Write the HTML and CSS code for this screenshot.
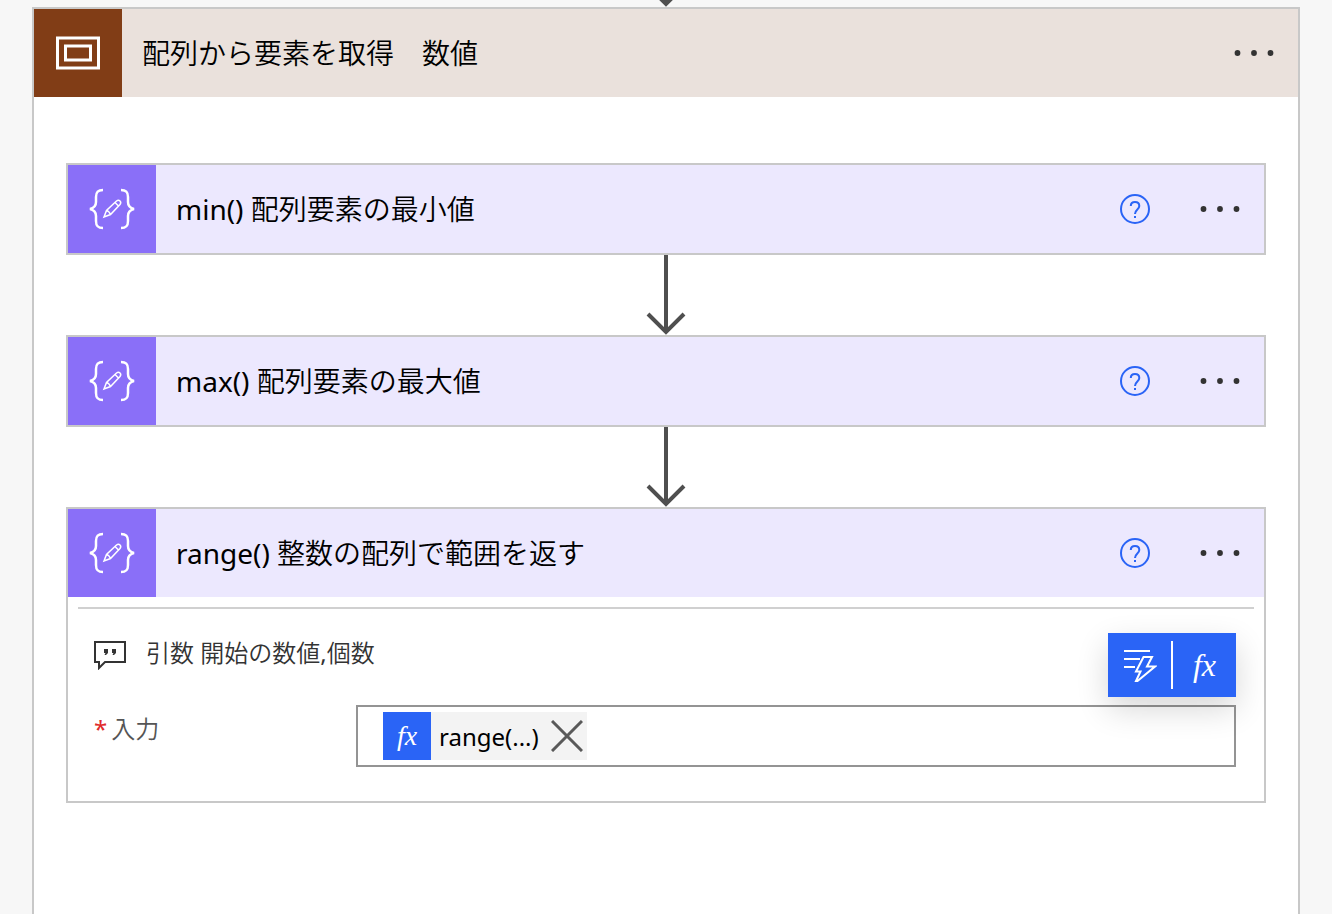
FILE: index.html
```html
<!DOCTYPE html>
<html lang="ja">
<head>
    <meta charset="UTF-8">
    <meta name="viewport" content="width=device-width, initial-scale=1.0">
    <title>配列から要素を取得　数値</title>
    <link rel="stylesheet" href="styles.css">
</head>
<body>
    <div class="connector connector-top">
        <svg width="40" height="80" viewBox="0 0 40 80"><path d="M20 0V77M2 59L20 77L38 59"/></svg>
    </div>

    <main class="scope">
        <header class="card-header scope-header">
            <div class="card-icon">
                <svg width="44" height="34" viewBox="0 0 44 34" fill="none" stroke="#fff" stroke-width="3">
                    <rect x="1.5" y="2" width="41" height="30"/>
                    <rect x="9.5" y="10" width="25" height="14"/>
                </svg>
            </div>
            <h1 class="card-title">配列から要素を取得　数値</h1>
            <button class="menu-button" aria-label="メニュー">
                <svg width="40" height="8" viewBox="0 0 40 8"><circle cx="3.5" cy="4" r="2.9"/><circle cx="20" cy="4" r="2.9"/><circle cx="36.5" cy="4" r="2.9"/></svg>
            </button>
        </header>

        <div class="scope-body">
            <section class="card">
                <header class="card-header">
                    <div class="card-icon">
                        <svg class="compose-icon" width="46" height="42" viewBox="0 0 46 42"><path class="brace" d="M14 2C8 2 7 5 7 9V14C7 18 5 20 1 21C5 22 7 24 7 28V33C7 37 8 40 14 40M32 2C38 2 39 5 39 9V14C39 18 41 20 45 21C41 22 39 24 39 28V33C39 37 38 40 32 40"/><path d="M15 29L17.500 22.500L27.500 13Q29.500 11.500 31 13T31 16.500L21.500 26.500ZM17.500 22.500Q20 23 21.500 26.500M26 14.500L29.500 18"/></svg>
                    </div>
                    <h2 class="card-title">min() 配列要素の最小値</h2>
                    <button class="help-button" aria-label="ヘルプ">
                        <svg width="30" height="30" viewBox="0 0 30 30"><circle cx="15" cy="15" r="14"/><path d="M10.800 12C10.800 9.500 12.500 8 15 8C17.700 8 19.300 9.700 19.300 12C19.300 15.500 15 15.500 15 20M15 22V24"/></svg>
                    </button>
                    <button class="menu-button" aria-label="メニュー">
                        <svg width="40" height="8" viewBox="0 0 40 8"><circle cx="3.5" cy="4" r="2.9"/><circle cx="20" cy="4" r="2.9"/><circle cx="36.5" cy="4" r="2.9"/></svg>
                    </button>
                </header>
            </section>

            <div class="connector">
                <svg width="40" height="80" viewBox="0 0 40 80"><path d="M20 0V77M2 59L20 77L38 59"/></svg>
            </div>

            <section class="card">
                <header class="card-header">
                    <div class="card-icon">
                        <svg class="compose-icon" width="46" height="42" viewBox="0 0 46 42"><path class="brace" d="M14 2C8 2 7 5 7 9V14C7 18 5 20 1 21C5 22 7 24 7 28V33C7 37 8 40 14 40M32 2C38 2 39 5 39 9V14C39 18 41 20 45 21C41 22 39 24 39 28V33C39 37 38 40 32 40"/><path d="M15 29L17.500 22.500L27.500 13Q29.500 11.500 31 13T31 16.500L21.500 26.500ZM17.500 22.500Q20 23 21.500 26.500M26 14.500L29.500 18"/></svg>
                    </div>
                    <h2 class="card-title">max() 配列要素の最大値</h2>
                    <button class="help-button" aria-label="ヘルプ">
                        <svg width="30" height="30" viewBox="0 0 30 30"><circle cx="15" cy="15" r="14"/><path d="M10.800 12C10.800 9.500 12.500 8 15 8C17.700 8 19.300 9.700 19.300 12C19.300 15.500 15 15.500 15 20M15 22V24"/></svg>
                    </button>
                    <button class="menu-button" aria-label="メニュー">
                        <svg width="40" height="8" viewBox="0 0 40 8"><circle cx="3.5" cy="4" r="2.9"/><circle cx="20" cy="4" r="2.9"/><circle cx="36.5" cy="4" r="2.9"/></svg>
                    </button>
                </header>
            </section>

            <div class="connector">
                <svg width="40" height="80" viewBox="0 0 40 80"><path d="M20 0V77M2 59L20 77L38 59"/></svg>
            </div>

            <section class="card">
                <header class="card-header">
                    <div class="card-icon">
                        <svg class="compose-icon" width="46" height="42" viewBox="0 0 46 42"><path class="brace" d="M14 2C8 2 7 5 7 9V14C7 18 5 20 1 21C5 22 7 24 7 28V33C7 37 8 40 14 40M32 2C38 2 39 5 39 9V14C39 18 41 20 45 21C41 22 39 24 39 28V33C39 37 38 40 32 40"/><path d="M15 29L17.500 22.500L27.500 13Q29.500 11.500 31 13T31 16.500L21.500 26.500ZM17.500 22.500Q20 23 21.500 26.500M26 14.500L29.500 18"/></svg>
                    </div>
                    <h2 class="card-title">range() 整数の配列で範囲を返す</h2>
                    <button class="help-button" aria-label="ヘルプ">
                        <svg width="30" height="30" viewBox="0 0 30 30"><circle cx="15" cy="15" r="14"/><path d="M10.800 12C10.800 9.500 12.500 8 15 8C17.700 8 19.300 9.700 19.300 12C19.300 15.500 15 15.500 15 20M15 22V24"/></svg>
                    </button>
                    <button class="menu-button" aria-label="メニュー">
                        <svg width="40" height="8" viewBox="0 0 40 8"><circle cx="3.5" cy="4" r="2.9"/><circle cx="20" cy="4" r="2.9"/><circle cx="36.5" cy="4" r="2.9"/></svg>
                    </button>
                </header>

                <div class="card-body">
                    <div class="comment">
                        <svg width="32" height="30" viewBox="0 0 32 30"><path d="M1 2H31V22H11L5 28V22H1Z" fill="none" stroke="#333" stroke-width="2"/><path d="M10 9H14V13L12 15H10.500L11.500 13H10ZM18 9H22V13L20 15H18.500L19.500 13H18Z" fill="#333"/></svg>
                        <span>引数 開始の数値,個数</span>
                    </div>

                    <div class="field">
                        <label class="field-label" for="inputs"><span class="required">*</span>入力</label>
                        <div class="field-box">
                            <div class="token">
                                <span class="token-icon fx">fx</span>
                                <span class="token-text">range(...)</span>
                                <button class="token-remove" aria-label="削除">
                                    <svg width="32" height="32" viewBox="0 0 32 32"><path d="M1 1L31 31M31 1L1 31"/></svg>
                                </button>
                            </div>
                            <input type="text" id="inputs">
                            <!-- Floating buttons above the active field -->
                            <div class="picker">
                                <button class="picker-button" aria-label="動的なコンテンツ">
                                    <svg width="34" height="34" viewBox="0 0 34 34" fill="none" stroke="#fff" stroke-width="2"><path d="M1 3H27M1 11H17M1 19H12"/><path d="M20.500 9H29L24 18.500H32L14.500 33H13L17.500 23.500H13Z"/></svg>
                                </button>
                                <button class="picker-button fx" aria-label="式">fx</button>
                            </div>
                        </div>
                    </div>
                </div>
            </section>
        </div>
    </main>
</body>
</html>
```
FILE: styles.css
```css
* {
    box-sizing: border-box;
}

body {
    margin: 0;
    min-height: 100vh;
    display: flex;
    flex-direction: column;
    padding: 0 32px;
    background-color: #f7f7f7;
    color: #000;
    font-family: "Noto Sans", "Noto Sans CJK JP DemiLight", "Noto Sans CJK JP", sans-serif;
    font-size: 24px;
}

button {
    display: flex;
    align-items: center;
    justify-content: center;
    padding: 0;
    border: none;
    background: none;
    cursor: pointer;
}

svg {
    display: block;
    flex: none;
}

/* Arrows between the steps */
.connector {
    display: flex;
    justify-content: center;
    align-items: flex-end;
    height: 80px;
}

.connector-top {
    height: 7px;
    overflow: hidden;
}

.connector path {
    fill: none;
    stroke: #4f4f4f;
    stroke-width: 4;
}

.scope {
    flex: 1;
    border: 2px solid #c8c8c8;
    border-bottom: none;
    background-color: #fff;
}

.scope-body {
    padding: 66px 32px 110px;
}

.card {
    border: 2px solid #c8c8c8;
    background-color: #fff;
}

.card-header {
    display: flex;
    align-items: center;
    height: 88px;
    background-color: #ece8fe;
}

.card-icon {
    display: flex;
    align-items: center;
    justify-content: center;
    width: 88px;
    height: 88px;
    background-color: #8a6ff8;
}

.scope-header {
    background-color: #eae1dc;
}

.scope-header .card-icon {
    background-color: #813d16;
}

.card-title {
    flex: 1;
    margin: 0 20px;
    font-size: 28px;
    font-weight: 400;
    line-height: 40px;
}

.compose-icon path {
    fill: none;
    stroke: #fff;
    stroke-width: 1.5;
}

.compose-icon .brace {
    stroke-width: 2.5;
}

.help-button {
    margin-right: 26px;
}

.help-button svg {
    fill: none;
    stroke: #2a64f6;
    stroke-width: 2;
}

.menu-button {
    width: 88px;
    height: 88px;
}

.menu-button svg {
    fill: #333;
}

.card-body {
    margin: 10px 10px 0;
    padding: 24px 18px 34px 16px;
    border-top: 2px solid #d0d0d0;
}

.comment {
    display: flex;
    gap: 20px;
    height: 40px;
    line-height: 40px;
    color: #333;
}

.comment svg {
    margin-top: 7px;
}

.field {
    display: flex;
    margin-top: 32px;
}

.field-label {
    width: 262px;
    padding-top: 4px;
    line-height: 40px;
    color: #555;
}

.required {
    margin-right: 4px;
    color: #e02b2b;
}

.field-box {
    position: relative;
    flex: 1;
    display: flex;
    align-items: center;
    height: 62px;
    padding-left: 25px;
    border: 2px solid #949494;
}

.field-box input {
    flex: 1;
    min-width: 0;
    height: 48px;
    border: none;
    outline: none;
    background: none;
    font: inherit;
}

.token {
    display: flex;
    align-items: center;
    height: 48px;
    background-color: #f3f3f3;
}

.fx {
    color: #fff;
    font-family: "Liberation Serif", serif;
    font-style: italic;
    font-size: 32px;
    line-height: 40px;
}

.token-icon {
    width: 48px;
    height: 48px;
    background-color: #2a64f6;
    font-size: 28px;
    line-height: 48px;
    text-align: center;
}

.token-text {
    margin: 0 12px 0 8px;
}

.token-remove {
    margin-right: 4px;
}

.token-remove path {
    stroke: #595959;
    stroke-width: 3;
}

.picker {
    position: absolute;
    right: -2px;
    bottom: 68px;
    display: flex;
    align-items: center;
    width: 128px;
    height: 64px;
    background-color: #2a64f6;
    box-shadow: 0 12px 32px rgba(0, 0, 0, 0.16);
}

.picker-button {
    flex: 1;
    height: 48px;
}

.picker-button + .picker-button {
    border-left: 2px solid #fff;
}
```
